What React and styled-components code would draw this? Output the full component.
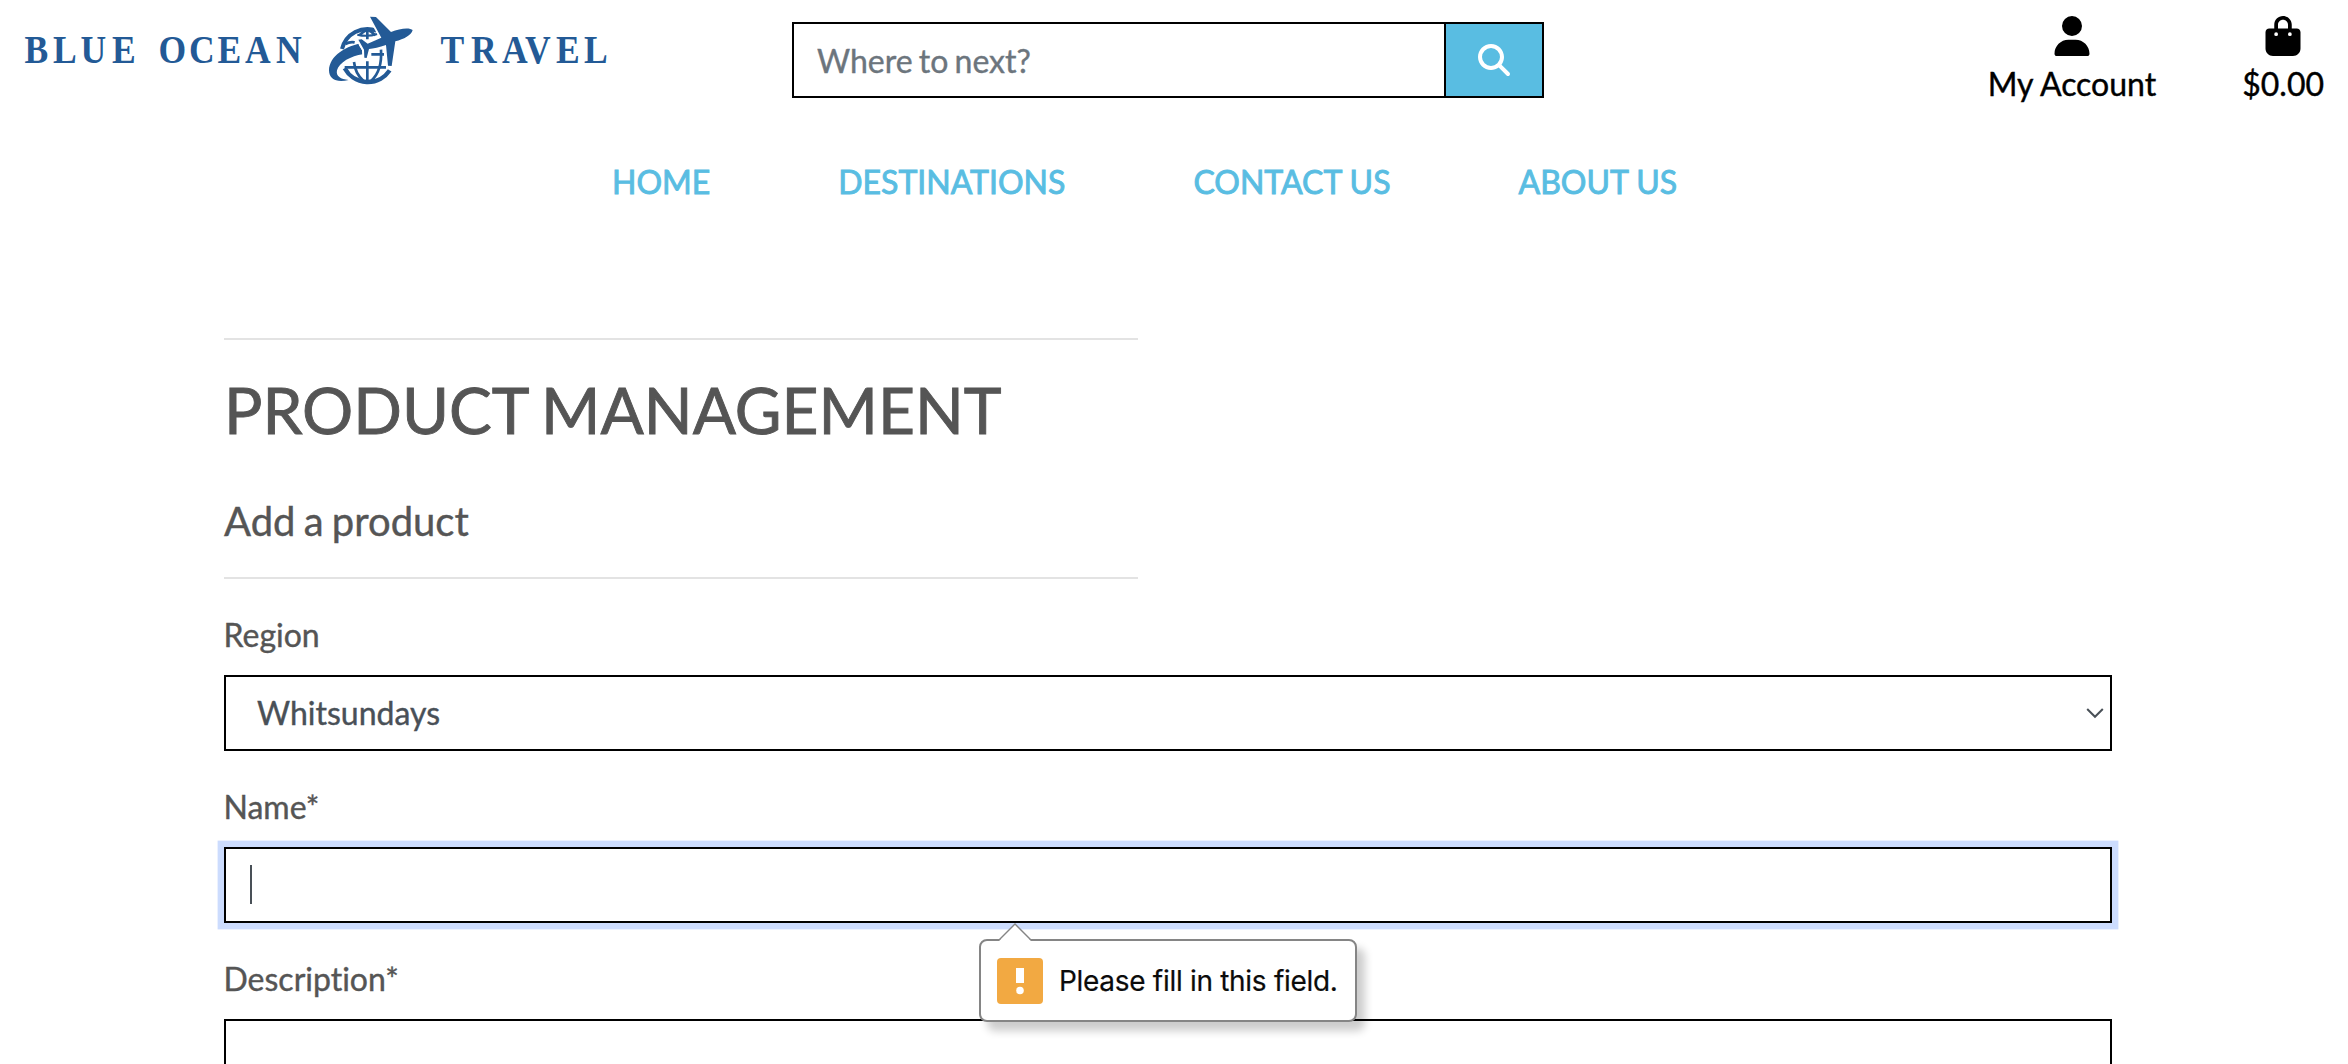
import React from "react";
import styled, { createGlobalStyle } from "styled-components";
import { FaUser, FaBagShopping, FaMagnifyingGlass } from "react-icons/fa6";

const GlobalStyle = createGlobalStyle`
  *, *::before, *::after { box-sizing: border-box; }
  html, body { margin: 0; background: #fff; overflow: hidden; }
  body {
    font-family: Lato, "Liberation Sans", sans-serif;
    font-size: 32px;
    font-weight: 400;
    line-height: 48px;
    color: #555;
    font-variant-ligatures: none;
    -webkit-text-stroke-width: 0.4px;
  }
`;

const Page = styled.div`
  width: 100%;
  height: 1064px;
  overflow: hidden;
`;

const Header = styled.header`
  display: flex;
  justify-content: space-between;
  align-items: flex-start;
  height: 159px;
`;

const HeaderSide = styled.div`
  flex: 1 1 0;
  min-width: 0;
  display: flex;
  justify-content: ${(p) => (p.$end ? "flex-end" : "flex-start")};
  gap: 86px;
  padding: ${(p) => (p.$end ? "16px 24px 0 0" : "0 12px 0 0")};
`;

const LogoSvg = styled.svg`
  display: block;
  width: 624px;
  height: 100px;
  flex: none;
`;

const SearchForm = styled.form`
  display: flex;
  flex: none;
  width: 752px;
  height: 76px;
  margin-top: 22px;
  border: 2px solid #000;
`;

const SearchInput = styled.input`
  flex: 1;
  min-width: 0;
  border: 0;
  outline: 0;
  padding: 2px 24px 0 23px;
  background: #fff;
  font: inherit;
  word-spacing: -2px;
  -webkit-text-stroke-width: 0.4px;
  color: #495057;
  &::placeholder { color: #6c757d; opacity: 1; }
`;

const SearchButton = styled.button`
  display: flex;
  align-items: center;
  justify-content: center;
  width: 98px;
  padding: 0;
  border: 0;
  border-left: 2px solid #000;
  background: #59bde2;
  color: #fff;
`;

const HeaderLink = styled.a`
  display: flex;
  flex-direction: column;
  align-items: center;
  gap: 4px;
  color: #000;
  text-decoration: none;
`;

const Nav = styled.nav`
  display: flex;
  gap: 128px;
  padding-left: 612px;
`;

const NavLink = styled.a`
  color: #59bde2;
  text-decoration: none;
  text-transform: uppercase;
  line-height: 46px;
  -webkit-text-stroke: 0.9px #59bde2;
`;

const Main = styled.main`
  padding: 133px 236px 0 224px;
`;

const Intro = styled.section`
  width: 914px;
  border-top: 2px solid #e3e3e3;
  border-bottom: 2px solid #e3e3e3;
  height: 241px;
  padding-top: 31px;
  margin-bottom: 32px;
`;

const Title = styled.h1`
  margin: 0 0 49px;
  font-size: 64px;
  font-weight: 400;
  line-height: 77px;
  text-transform: uppercase;
  white-space: nowrap;
  word-spacing: -3px;
  -webkit-text-stroke-width: 0.9px;
`;

const Subtitle = styled.h2`
  margin: 0;
  font-size: 40px;
  font-weight: 400;
  line-height: 48px;
  word-spacing: -2px;
`;

const Field = styled.div`
  position: relative;
  display: flex;
  flex-direction: column;
  gap: 16px;
  margin-bottom: 32px;
`;

const Label = styled.label`
  display: block;
  height: 48px;
  text-indent: -0.5px;
`;

const Control = styled.div`
  display: flex;
  align-items: center;
  justify-content: ${(p) => (p.$select ? "space-between" : "flex-start")};
  height: ${(p) => p.$height || 76}px;
  padding: ${(p) => (p.$select ? "0 6px 0 31px" : "0 24px")};
  border: 2px solid #000;
  background: #fff;
  color: #495057;
  box-shadow: ${(p) => (p.$focused ? "0 0 0 6.4px #ccdcfe" : "none")};
`;

const Caret = styled.span`
  width: 2px;
  height: 39px;
  margin-top: -1px;
  background: #495057;
`;

const Chevron = styled.svg`
  width: 18px;
  height: 12px;
`;

const Bubble = styled.div`
  position: absolute;
  left: 755px;
  top: 156px;
  z-index: 2;
  display: flex;
  align-items: center;
  gap: 16px;
  width: 378px;
  height: 83px;
  padding-left: 16px;
  border: 2px solid #858585;
  border-radius: 8px;
  background: #fff;
  box-shadow: 8px 9px 8px rgba(0, 0, 0, 0.2);
`;

const BubbleArrow = styled.svg`
  position: absolute;
  left: 17px;
  top: -18px;
  width: 34px;
  height: 18px;
`;

const Warning = styled.svg`
  width: 46px;
  height: 46px;
  flex: none;
`;

const BubbleText = styled.span`
  font-family: Inter, "Liberation Sans", sans-serif;
  font-size: 28px;
  letter-spacing: -0.3px;
  color: #0b0b0b;
  white-space: nowrap;
  -webkit-text-stroke-width: 0.2px;
`;

const at = (...xs) => xs.map((x) => (x / 0.9).toFixed(1)).join(" ");

function Logo() {
  return (
    <LogoSvg viewBox="0 0 624 100" role="img" aria-label="Blue Ocean Travel">
      <g
        transform="scale(0.9 1)"
        fill="#235a96"
        fontFamily="'Liberation Serif', serif"
        fontWeight="700"
        fontSize="39.5"
      >
        <text y="63" x={at(24.5, 53, 80.5, 112)}>BLUE</text>
        <text y="63" x={at(158.5, 189, 217.5, 245, 276)}>OCEAN</text>
        <text y="63" x={at(440.5, 471, 502, 525, 556, 584)}>TRAVEL</text>
      </g>
      <g transform="translate(310 0) scale(0.33333)">
        <g fill="none" stroke="#235a96" strokeWidth="8">
          <path d="M96 147 A79 79 0 0 1 200 92" strokeWidth="12" />
          <path d="M104 205 A79 79 0 0 0 239 211" strokeWidth="13" />
          <path
            d="M104 202H228M184 163H222M172 184V242M172 90V118"
            strokeWidth="8"
          />
          <path
            d="M132 186Q136 222 160 242M213 149Q217 212 184 242M148 106Q158 95 170 90M196 106Q188 96 174 90M106 132Q120 124 134 127"
            strokeWidth="8"
          />
          <path d="M142 104Q172 112 202 102" strokeWidth="6" />
        </g>
        <path
          d="M160 129C108 136 58 168 57 211C57 240 82 248 116 240C92 238 77 229 81 211C87 188 124 167 158 163L156 150L146 134Z"
          fill="#235a96"
        />
        <path
          d="M180 50L198 51L243 96C270 84 300 82 308 90C304 106 282 117 256 124L245 198L234 197L228 135C208 142 190 145 177 147L170 174L163 173L162 149L145 119L155 118L173 131L214 113Z"
          fill="#235a96"
          stroke="#fff"
          strokeWidth="12"
          strokeLinejoin="round"
          paintOrder="stroke"
        />
      </g>
    </LogoSvg>
  );
}

const links = ["Home", "Destinations", "Contact us", "About us"];

export default function App() {
  return (
    <Page>
      <GlobalStyle />
      <Header>
        <HeaderSide>
          <Logo />
        </HeaderSide>
        <SearchForm>
          <SearchInput placeholder="Where to next?" />
          <SearchButton type="button" aria-label="Search">
            <FaMagnifyingGlass size={32} />
          </SearchButton>
        </SearchForm>
        <HeaderSide $end>
          <HeaderLink>
            <FaUser size={40} />
            My Account
          </HeaderLink>
          <HeaderLink>
            <FaBagShopping size={40} />
            $0.00
          </HeaderLink>
        </HeaderSide>
      </Header>
      <Nav>
        {links.map((l) => (
          <NavLink key={l}>{l}</NavLink>
        ))}
      </Nav>
      <Main>
        <Intro>
          <Title>Product Management</Title>
          <Subtitle>Add a product</Subtitle>
        </Intro>
        <Field>
          <Label>Region</Label>
          <Control $select>
            Whitsundays
            <Chevron viewBox="0 0 18 12">
              <path d="M1.2 2L9 9.8L16.8 2" fill="none" stroke="#495057" strokeWidth="2" />
            </Chevron>
          </Control>
        </Field>
        <Field>
          <Label>Name*</Label>
          <Control $focused>
            <Caret />
          </Control>
          <Bubble>
            <BubbleArrow viewBox="0 0 34 18">
              <path d="M1 18L17 1L33 18Z" fill="#fff" />
              <path d="M1 17L17 1L33 17" fill="none" stroke="#858585" strokeWidth="1.4" />
            </BubbleArrow>
            <Warning viewBox="0 0 46 46">
              <rect width="46" height="46" rx="4" fill="#f2a942" />
              <rect x="19" y="10" width="8" height="15" fill="#fff" />
              <circle cx="23" cy="32.5" r="3.8" fill="#fff" />
            </Warning>
            <BubbleText>Please fill in this field.</BubbleText>
          </Bubble>
        </Field>
        <Field>
          <Label>Description*</Label>
          <Control $height={160} />
        </Field>
      </Main>
    </Page>
  );
}
